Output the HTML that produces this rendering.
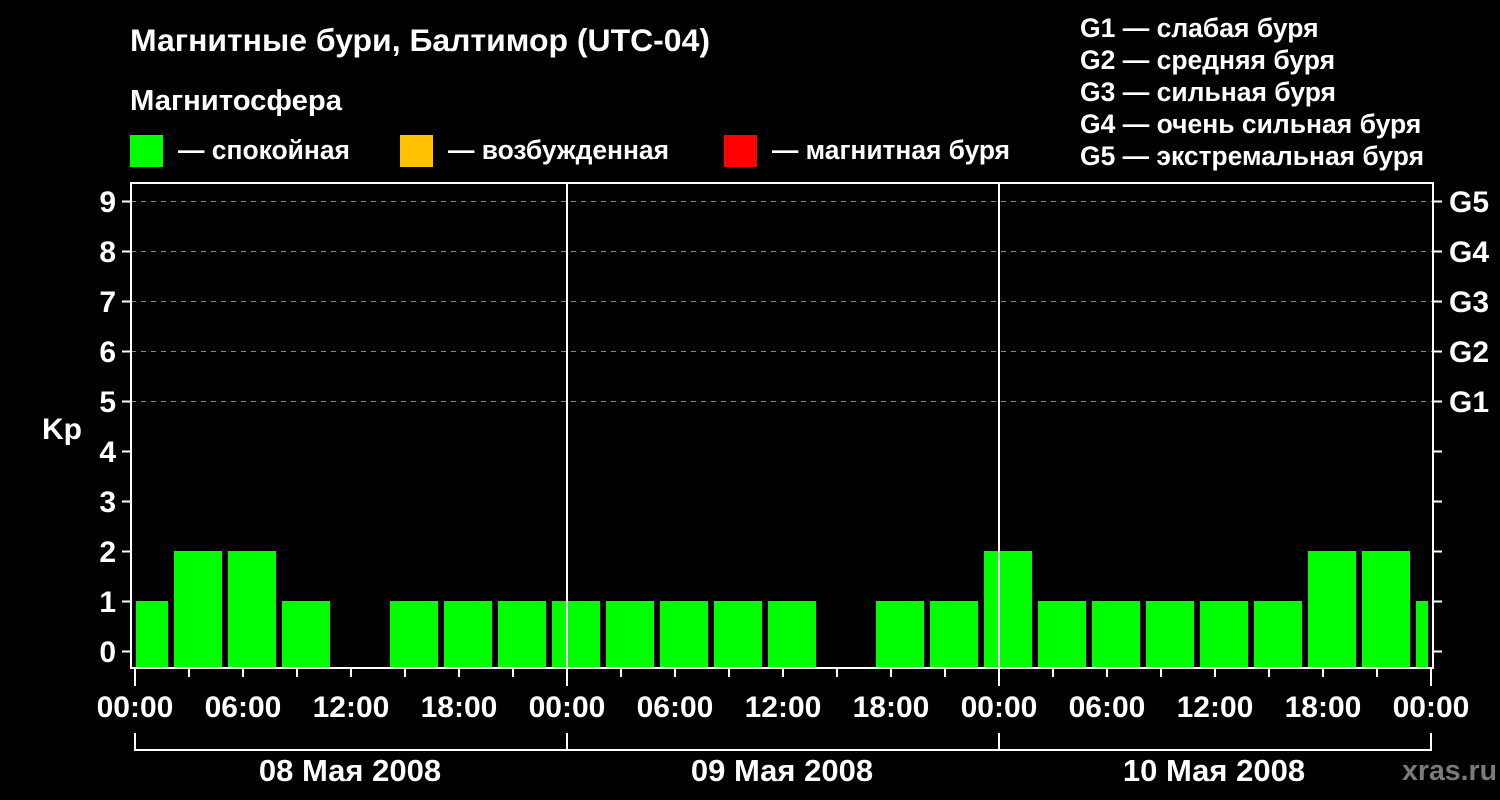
<!DOCTYPE html>
<html><head><meta charset="utf-8"><style>
html,body{margin:0;padding:0;background:#000;width:1500px;height:800px;overflow:hidden}
svg{display:block}
text{font-family:"Liberation Sans",Arial,sans-serif;font-weight:bold;fill:#fff}
</style></head><body>
<svg width="1500" height="800" viewBox="0 0 1500 800">
<rect width="1500" height="800" fill="#000"/>
<text x="130" y="51" font-size="31.5" textLength="580" lengthAdjust="spacingAndGlyphs">Магнитные бури, Балтимор (UTC-04)</text>
<text x="130" y="110" font-size="29" textLength="212" lengthAdjust="spacingAndGlyphs">Магнитосфера</text>
<rect x="130" y="135" width="33" height="32" fill="#00ff00"/>
<text x="178" y="159" font-size="26.5" textLength="172" lengthAdjust="spacingAndGlyphs">— спокойная</text>
<rect x="400" y="135" width="33" height="32" fill="#ffc000"/>
<text x="448" y="159" font-size="26.5" textLength="221" lengthAdjust="spacingAndGlyphs">— возбужденная</text>
<rect x="724" y="135" width="33" height="32" fill="#ff0000"/>
<text x="772" y="159" font-size="26.5" textLength="238" lengthAdjust="spacingAndGlyphs">— магнитная буря</text>
<g font-size="26.5">
<text x="1080" y="37">G1 — слабая буря</text>
<text x="1080" y="69">G2 — средняя буря</text>
<text x="1080" y="101">G3 — сильная буря</text>
<text x="1080" y="133">G4 — очень сильная буря</text>
<text x="1080" y="165" textLength="344" lengthAdjust="spacingAndGlyphs">G5 — экстремальная буря</text>
</g>
<g stroke="#888" stroke-width="1" stroke-dasharray="5,5">
<line x1="131" y1="201.5" x2="1433" y2="201.5"/>
<line x1="131" y1="251.5" x2="1433" y2="251.5"/>
<line x1="131" y1="301.5" x2="1433" y2="301.5"/>
<line x1="131" y1="351.5" x2="1433" y2="351.5"/>
<line x1="131" y1="401.5" x2="1433" y2="401.5"/>
</g>
<g fill="#00ff00">
<rect x="136" y="601" width="32" height="66"/>
<rect x="174" y="551" width="48" height="116"/>
<rect x="228" y="551" width="48" height="116"/>
<rect x="282" y="601" width="48" height="66"/>
<rect x="390" y="601" width="48" height="66"/>
<rect x="444" y="601" width="48" height="66"/>
<rect x="498" y="601" width="48" height="66"/>
<rect x="552" y="601" width="48" height="66"/>
<rect x="606" y="601" width="48" height="66"/>
<rect x="660" y="601" width="48" height="66"/>
<rect x="714" y="601" width="48" height="66"/>
<rect x="768" y="601" width="48" height="66"/>
<rect x="876" y="601" width="48" height="66"/>
<rect x="930" y="601" width="48" height="66"/>
<rect x="984" y="551" width="48" height="116"/>
<rect x="1038" y="601" width="48" height="66"/>
<rect x="1092" y="601" width="48" height="66"/>
<rect x="1146" y="601" width="48" height="66"/>
<rect x="1200" y="601" width="48" height="66"/>
<rect x="1254" y="601" width="48" height="66"/>
<rect x="1308" y="551" width="48" height="116"/>
<rect x="1362" y="551" width="48" height="116"/>
<rect x="1416" y="601" width="12" height="66"/>
</g>
<g stroke="#fff" stroke-width="2" fill="none">
<rect x="131" y="183" width="1302" height="485"/>
<line x1="567" y1="183" x2="567" y2="668"/>
<line x1="999" y1="183" x2="999" y2="668"/>
<path d="M122 201.5h9M122 251.5h9M122 301.5h9M122 351.5h9M122 401.5h9M122 451.5h9M122 501.5h9M122 551.5h9M122 601.5h9M122 651.5h9"/>
<path d="M1433 201.5h9M1433 251.5h9M1433 301.5h9M1433 351.5h9M1433 401.5h9M1433 451.5h9M1433 501.5h9M1433 551.5h9M1433 601.5h9M1433 651.5h9"/>
<path d="M135 668v18M567 668v18M999 668v18M1431 668v18"/>
<path d="M189 668v9M243 668v9M297 668v9M351 668v9M405 668v9M459 668v9M513 668v9M621 668v9M675 668v9M729 668v9M783 668v9M837 668v9M891 668v9M945 668v9M1053 668v9M1107 668v9M1161 668v9M1215 668v9M1269 668v9M1323 668v9M1377 668v9"/>
<path d="M135 733v17h1296v-17M567 733v17M999 733v17"/>
</g>
<g font-size="30" text-anchor="end">
<text x="116" y="212">9</text><text x="116" y="262">8</text><text x="116" y="312">7</text>
<text x="116" y="362">6</text><text x="116" y="412">5</text><text x="116" y="462">4</text>
<text x="116" y="512">3</text><text x="116" y="562">2</text><text x="116" y="612">1</text>
<text x="116" y="662">0</text>
</g>
<text x="42" y="439" font-size="30">Kp</text>
<g font-size="30">
<text x="1449" y="212">G5</text><text x="1449" y="262">G4</text><text x="1449" y="312">G3</text>
<text x="1449" y="362">G2</text><text x="1449" y="412">G1</text>
</g>
<g font-size="30" text-anchor="middle">
<text x="135" y="717">00:00</text><text x="243" y="717">06:00</text><text x="351" y="717">12:00</text><text x="459" y="717">18:00</text>
<text x="567" y="717">00:00</text><text x="675" y="717">06:00</text><text x="783" y="717">12:00</text><text x="891" y="717">18:00</text>
<text x="999" y="717">00:00</text><text x="1107" y="717">06:00</text><text x="1215" y="717">12:00</text><text x="1323" y="717">18:00</text>
<text x="1431" y="717">00:00</text>
</g>
<g font-size="31" text-anchor="middle">
<text x="350" y="781">08 Мая 2008</text>
<text x="782" y="781">09 Мая 2008</text>
<text x="1214" y="781">10 Мая 2008</text>
</g>
<text x="1402" y="780" font-size="28.5" style="fill:#7a7a7a">xras.ru</text>
</svg>
</body></html>
